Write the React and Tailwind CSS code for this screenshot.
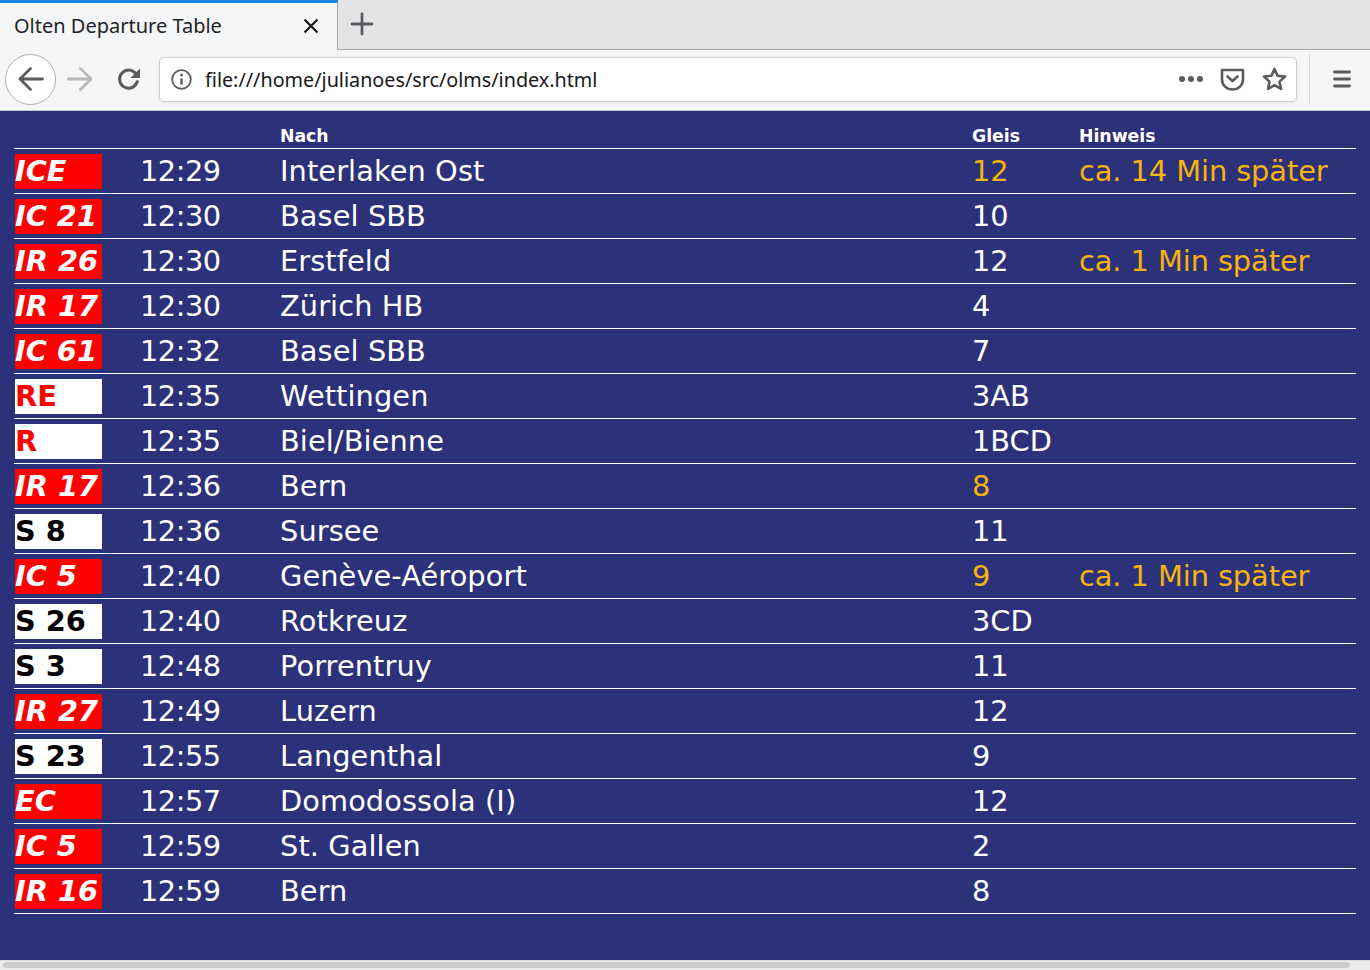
import React from 'react';

const departures = [
  { line: 'ICE', kind: 'red', time: '12:29', to: 'Interlaken Ost', track: '12', trackChanged: true, note: 'ca. 14 Min später' },
  { line: 'IC 21', kind: 'red', time: '12:30', to: 'Basel SBB', track: '10' },
  { line: 'IR 26', kind: 'red', time: '12:30', to: 'Erstfeld', track: '12', note: 'ca. 1 Min später' },
  { line: 'IR 17', kind: 'red', time: '12:30', to: 'Zürich HB', track: '4' },
  { line: 'IC 61', kind: 'red', time: '12:32', to: 'Basel SBB', track: '7' },
  { line: 'RE', kind: 'regio', time: '12:35', to: 'Wettingen', track: '3AB' },
  { line: 'R', kind: 'regio', time: '12:35', to: 'Biel/Bienne', track: '1BCD' },
  { line: 'IR 17', kind: 'red', time: '12:36', to: 'Bern', track: '8', trackChanged: true },
  { line: 'S 8', kind: 'sbahn', time: '12:36', to: 'Sursee', track: '11' },
  { line: 'IC 5', kind: 'red', time: '12:40', to: 'Genève-Aéroport', track: '9', trackChanged: true, note: 'ca. 1 Min später' },
  { line: 'S 26', kind: 'sbahn', time: '12:40', to: 'Rotkreuz', track: '3CD' },
  { line: 'S 3', kind: 'sbahn', time: '12:48', to: 'Porrentruy', track: '11' },
  { line: 'IR 27', kind: 'red', time: '12:49', to: 'Luzern', track: '12' },
  { line: 'S 23', kind: 'sbahn', time: '12:55', to: 'Langenthal', track: '9' },
  { line: 'EC', kind: 'red', time: '12:57', to: 'Domodossola (I)', track: '12' },
  { line: 'IC 5', kind: 'red', time: '12:59', to: 'St. Gallen', track: '2' },
  { line: 'IR 16', kind: 'red', time: '12:59', to: 'Bern', track: '8' },
];

const badgeStyles = {
  red: 'bg-[#ff0000] text-white italic',
  regio: 'bg-white text-[#ff0000]',
  sbahn: 'bg-white text-black',
};

const Icon = ({ className, children, viewBox = '0 0 24 24' }) => (
  <svg viewBox={viewBox} className={className} fill="none" stroke="currentColor" strokeLinecap="round" strokeLinejoin="round">
    {children}
  </svg>
);

const BrowserChrome = () => (
  <div className="font-['Noto_Sans',sans-serif]">
    {/* Pasek kart */}
    <div className="flex h-[50px] bg-[#e3e4e6] border-b border-[#a9a9ab]">
      <div className="flex w-[338px] h-[50px] items-center justify-between bg-[#f5f6f7] border-t-[3px] border-t-[#1a82e8] border-r border-r-[#a9a9ab] pl-[14px] pr-[17px] pb-[1px]">
        <span className="text-[20px] text-[#232327] leading-none">Olten Departure Table</span>
        <Icon className="w-[18px] h-[18px] text-[#18181a]" viewBox="0 0 18 18">
          <path d="M2.5 2.5 15.5 15.5M15.5 2.5 2.5 15.5" strokeWidth="2.2" strokeLinecap="butt" />
        </Icon>
      </div>
      <div className="pl-[12px] pt-[12px]">
        <Icon className="w-[24px] h-[24px] text-[#5b5b5e]" viewBox="0 0 24 24">
          <path d="M12 2v20M2 12h20" strokeWidth="2.8" />
        </Icon>
      </div>
    </div>

    {/* Pasek adresu */}
    <div className="flex h-[61px] items-center bg-[#f5f6f7] border-b border-[#c8c8c9] pl-[5px]">
      <div className="flex w-[51px] h-[51px] -mt-[2px] shrink-0 items-center justify-center rounded-full border border-[#b1b1b3] bg-white">
        <Icon className="w-[26px] h-[26px] text-[#5b5b5e]" viewBox="0 0 26 26">
          <path d="M24.5 13H2M12.5 2.5 2 13l10.5 10.500" strokeWidth="2.8" />
        </Icon>
      </div>
      <Icon className="w-[26px] h-[26px] ml-[11px] -mt-[2px] text-[#b8b8ba]" viewBox="0 0 26 26">
        <path d="M1.5 13H24M13.5 2.5 24 13 13.500 23.500" strokeWidth="2.8" />
      </Icon>
      <Icon className="w-[24px] h-[24px] ml-[24px] -mt-[2px] text-[#5b5b5e]" viewBox="0 0 24 24">
        <path d="M20.500 13.500a9 9 0 1 1-3-8.200L21 8.500" strokeWidth="3" strokeLinecap="butt" />
        <path d="M23 1.500V11h-9.500z" fill="currentColor" stroke="none" />
      </Icon>
      <div className="flex w-[1138px] h-[45px] ml-[18px] -mt-[2px] items-center rounded-[5px] border border-[#cfcfd0] bg-white shadow-[0_1px_3px_rgba(0,0,0,0.08)] pl-[11px] pr-[9px]">
        <Icon className="w-[21px] h-[21px] text-[#5b5b5e]" viewBox="0 0 21 21">
          <circle cx="10.500" cy="10.500" r="9.300" strokeWidth="1.800" />
          <path d="M10.500 9.500v6" strokeWidth="2.400" strokeLinecap="butt" />
          <circle cx="10.500" cy="6" r="1.400" fill="currentColor" stroke="none" />
        </Icon>
        <span className="ml-[13px] pt-[2px] text-[19.75px] text-[#18181a] leading-none">file:///home/julianoes/src/olms/index.html</span>
        <div className="flex-1" />
        <Icon className="w-[26px] h-[8px] text-[#5b5b5e]" viewBox="0 0 26 8">
          <circle cx="4" cy="4" r="3" fill="currentColor" stroke="none" />
          <circle cx="13" cy="4" r="3" fill="currentColor" stroke="none" />
          <circle cx="22" cy="4" r="3" fill="currentColor" stroke="none" />
        </Icon>
        <Icon className="w-[25px] h-[23px] ml-[16px] text-[#5b5b5e]" viewBox="0 0 25 23">
          <path d="M2 2h21v9.500a10.500 10 0 0 1-21 0z" strokeWidth="2.600" />
          <path d="m7.500 8.500 5 4.500 5-4.500" strokeWidth="2.600" />
        </Icon>
        <Icon className="w-[25px] h-[24px] ml-[17px] text-[#5b5b5e]" viewBox="0 0 25 24">
          <path d="m12.500 2 3.100 6.800 7.400.8-5.500 5 1.500 7.300-6.500-3.700-6.500 3.700 1.500-7.300-5.500-5 7.400-.8z" strokeWidth="2.600" />
        </Icon>
      </div>
      <div className="w-px h-[50px] ml-[12px] -mt-[2px] bg-[#d5d5d6]" />
      <Icon className="w-[18px] h-[18px] ml-[23px] -mt-[2px] text-[#5b5b5e]" viewBox="0 0 18 18">
        <path d="M1.500 2h15M1.500 9h15M1.500 16h15" strokeWidth="2.800" />
      </Icon>
    </div>
  </div>
);

const DepartureRow = ({ dep }) => (
  <div className="grid grid-cols-[126px_140px_692px_1fr] h-[45px] items-center border-b border-white text-[28.8px] leading-none">
    <div className={`flex w-[87px] h-[35px] ml-px items-center font-bold whitespace-nowrap ${badgeStyles[dep.kind]}`}>{dep.line}</div>
    <div className="tracking-[-0.45px]">{dep.time}</div>
    <div className="tracking-[0.1px]">{dep.to}</div>
    <div className="flex">
      <span className={`w-[107px] ${dep.trackChanged ? 'text-[#f7b30c]' : ''}`}>{dep.track}</span>
      {dep.note && <span className="text-[#f7b30c] tracking-[-0.06px] whitespace-nowrap">{dep.note}</span>}
    </div>
  </div>
);

const App = () => {
  return (
    <div className="flex flex-col h-[970px] overflow-hidden bg-[#2c327a]">
      <BrowserChrome />

      <main className="flex-1 px-[14px] font-['DejaVu_Sans',sans-serif] text-white">
        {/* Nagłówek tabeli */}
        <div className="grid grid-cols-[126px_140px_692px_1fr] h-[38px] items-end border-b border-white pb-[3px] text-[17.28px] font-bold leading-none">
          <div />
          <div />
          <div>Nach</div>
          <div className="flex">
            <span className="w-[107px]">Gleis</span>
            <span>Hinweis</span>
          </div>
        </div>

        {departures.map((dep, i) => (
          <DepartureRow key={i} dep={dep} />
        ))}
      </main>

      {/* Poziomy pasek przewijania */}
      <div className="h-[10px] bg-[#ebebeb] border-t border-[#dcdcdc] pl-[3px] pr-[20px] pt-[1px]">
        <div className="h-[6px] rounded-full bg-[#cdcdcd]" />
      </div>
    </div>
  );
};

export default App;
